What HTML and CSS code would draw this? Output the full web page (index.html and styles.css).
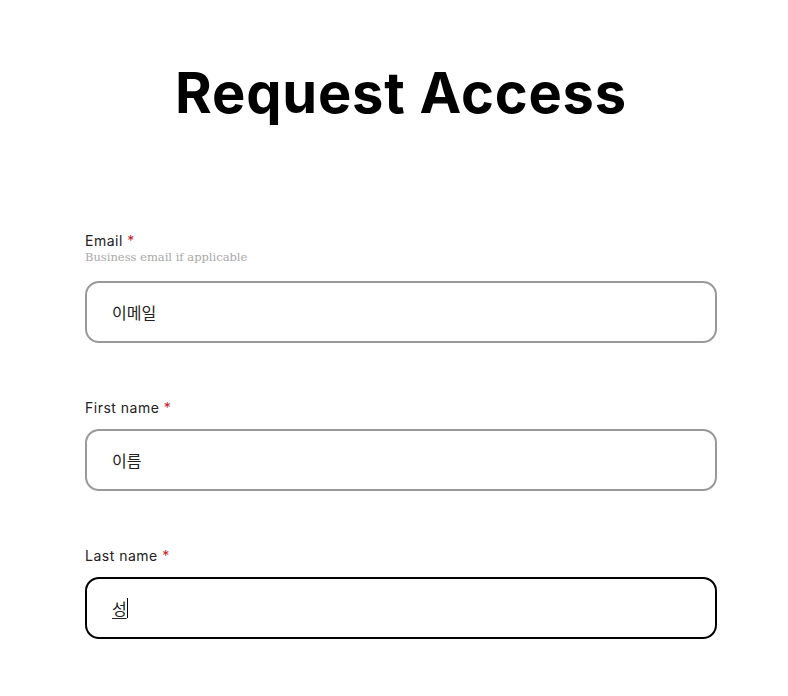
FILE: index.html
```html
<!DOCTYPE html>
<html lang="ko">
<head>
    <meta charset="UTF-8">
    <meta name="viewport" content="width=device-width, initial-scale=1.0">
    <title>Request Access</title>
    <link rel="stylesheet" href="styles.css">
</head>
<body>

<h1 class="title">Request Access</h1>

<form class="access-form">
    <!-- Email -->
    <div class="field">
        <label for="email">Email <span class="req">*</span></label>
        <div class="hint">Business email if applicable</div>
        <input type="email" id="email" class="text-input" placeholder="이메일">
    </div>

    <!-- First name -->
    <div class="field">
        <label for="firstName">First name <span class="req">*</span></label>
        <input type="text" id="firstName" class="text-input" placeholder="이름">
    </div>

    <!-- Last name (focused, composing) -->
    <div class="field">
        <label>Last name <span class="req">*</span></label>
        <div class="text-input focused"><span class="composing">성</span><span class="caret"></span></div>
    </div>
</form>

</body>
</html>
```

FILE: styles.css
```css
body {
    margin: 0;
    padding: 0;
    background-color: #ffffff;
    color: #000;
    font-family: Inter, "Noto Sans", "Noto Sans CJK KR", sans-serif;
}
.title {
    margin: 60px 0 0 14px;
    text-align: center;
    font-size: 56px;
    line-height: 66px;
    font-weight: 700;
    letter-spacing: 0.8px;
}
.access-form {
    width: 632px;
    margin: 107px 0 0 85px;
    display: flex;
    flex-direction: column;
    gap: 57px;
}
.field {
    display: flex;
    flex-direction: column;
}
.field label {
    font-size: 14px;
    line-height: 16px;
    color: #222;
    letter-spacing: 0.5px;
    margin-bottom: 13px;
}
.field .req {
    color: #c0242b;
}
.hint {
    font-family: "DejaVu Serif", "Liberation Serif", serif;
    font-size: 11.5px;
    line-height: 14px;
    color: #a8a8a8;
    margin-top: -12px;
    margin-bottom: 17px;
}
.text-input {
    box-sizing: border-box;
    height: 62px;
    width: 100%;
    padding: 0 25px;
    border: 2px solid #999;
    border-radius: 14px;
    background: #fff;
    font-family: "Noto Sans CJK KR", sans-serif;
    font-size: 16px;
    color: #222;
    outline: none;
}
.text-input::placeholder {
    color: #222;
    opacity: 1;
}
.text-input.focused {
    border-color: #000;
    display: flex;
    align-items: center;
}
.composing {
    text-decoration: underline;
    text-underline-offset: 3px;
}
.caret {
    width: 1px;
    height: 20px;
    background: #000;
}
```
